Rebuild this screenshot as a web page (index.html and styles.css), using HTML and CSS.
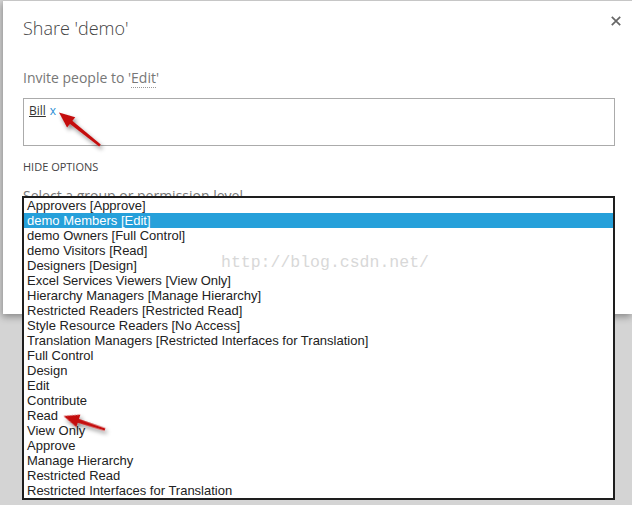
FILE: index.html
```html
<!DOCTYPE html>
<html>
<head>
<meta charset="utf-8">
<title>Share 'demo'</title>
<link rel="stylesheet" href="styles.css">
</head>
<body>
<div class="screen">
  <div class="dialog">
    <div class="header">
      <h1 class="title">Share 'demo'</h1>
      <span class="close" aria-label="Close">
        <svg width="10" height="10" viewBox="0 0 10 10"><path d="M0.8 0.8 L9.2 9.2 M9.2 0.8 L0.8 9.2" stroke="#666" stroke-width="1.7" fill="none"/></svg>
      </span>
    </div>
    <div class="invite">Invite people to '<span class="perm">Edit</span>'</div>
    <div class="people-box"><span class="person">Bill</span><span class="remove">x</span></div>
    <div class="hide-options">HIDE OPTIONS</div>
    <div class="select-wrap">
      <div class="select-label">Select a group or permission level</div>
      <ul class="listbox">
        <li>Approvers [Approve]</li>
        <li class="selected">demo Members [Edit]</li>
        <li>demo Owners [Full Control]</li>
        <li>demo Visitors [Read]</li>
        <li>Designers [Design]</li>
        <li>Excel Services Viewers [View Only]</li>
        <li>Hierarchy Managers [Manage Hierarchy]</li>
        <li>Restricted Readers [Restricted Read]</li>
        <li>Style Resource Readers [No Access]</li>
        <li>Translation Managers [Restricted Interfaces for Translation]</li>
        <li>Full Control</li>
        <li>Design</li>
        <li>Edit</li>
        <li>Contribute</li>
        <li>Read</li>
        <li>View Only</li>
        <li>Approve</li>
        <li>Manage Hierarchy</li>
        <li>Restricted Read</li>
        <li>Restricted Interfaces for Translation</li>
      </ul>
    </div>
  </div>
  <div class="watermark">http://blog.csdn.net/</div>
  <svg class="arrows" width="632" height="505" viewBox="0 0 632 505">
    <defs>
      <filter id="sh" x="-30%" y="-30%" width="160%" height="160%">
        <feDropShadow dx="2" dy="3" stdDeviation="2" flood-color="#000" flood-opacity="0.45"/>
      </filter>
    </defs>
    <g filter="url(#sh)" fill="#c40d0d">
      <g transform="translate(100,145.5) rotate(218.8)">
        <polygon points="0,-1.3 38,-2 38,2 0,1.3"/>
        <polygon points="37,-6.5 52.6,0 37,6.5"/>
      </g>
      <g transform="translate(105,429.5) rotate(198)">
        <polygon points="0,-1.3 29,-2 29,2 0,1.3"/>
        <polygon points="28,-6.5 43.6,0 28,6.5"/>
      </g>
    </g>
  </svg>
</div>
</body>
</html>
```

FILE: styles.css
```css
html, body {
  margin: 0;
  padding: 0;
}

body {
  width: 632px;
  height: 505px;
  overflow: hidden;
  background: #d4d4d4;
  font-family: "Open Sans", "Noto Sans", sans-serif;
}

.screen {
  position: relative;
  width: 632px;
  height: 505px;
}

.dialog {
  position: relative;
  margin-left: 3px;
  height: 314px;
  box-sizing: border-box;
  background: #fff;
  border-top: 1px solid #c6c6c6;
  box-shadow: -1px 3px 7px rgba(0, 0, 0, 0.35);
  padding: 15px 17px 0 20px;
}

.header {
  display: flex;
  justify-content: space-between;
  align-items: flex-start;
}

.title {
  margin: 0;
  font-size: 18px;
  font-weight: 300;
  line-height: 24px;
  color: #444;
}

.close {
  display: block;
  width: 10px;
  height: 10px;
  margin-right: -6px;
}

.close svg {
  display: block;
}

.invite {
  margin-top: 28px;
  font-size: 14px;
  line-height: 20px;
  color: #777;
}

.perm {
  border-bottom: 1px dotted #999;
}

.people-box {
  margin-top: 10px;
  height: 48px;
  box-sizing: border-box;
  border: 1px solid #ababab;
  padding: 4px 5px;
  font-size: 12px;
  line-height: 16px;
}

.person {
  color: #333;
  text-decoration: underline;
}

.remove {
  color: #2a8dd4;
  margin-left: 4px;
}

.hide-options {
  margin-top: 14px;
  font-size: 11px;
  line-height: 14px;
  color: #444;
}

.select-wrap {
  position: relative;
  margin-top: 12px;
}

.select-label {
  font-size: 14px;
  line-height: 20px;
  color: #777;
}

.listbox {
  position: absolute;
  top: 10px;
  left: -1px;
  width: 593px;
  box-sizing: border-box;
  margin: 0;
  padding: 0;
  list-style: none;
  background: #fff;
  border: 2px solid #1e1e1e;
  font-family: "Liberation Sans", Arial, sans-serif;
  font-size: 13px;
  line-height: 15px;
  color: #222;
}

.listbox li {
  height: 15px;
  padding-left: 3px;
  white-space: nowrap;
}

.listbox li.selected {
  background: #26a0da;
  color: #fff;
}

.watermark {
  position: absolute;
  left: 221px;
  top: 253px;
  font-family: "Liberation Mono", "DejaVu Sans Mono", monospace;
  font-size: 16.5px;
  line-height: 20px;
  color: #d8d8d8;
  pointer-events: none;
}

.arrows {
  position: absolute;
  left: 0;
  top: 0;
  pointer-events: none;
}
```
